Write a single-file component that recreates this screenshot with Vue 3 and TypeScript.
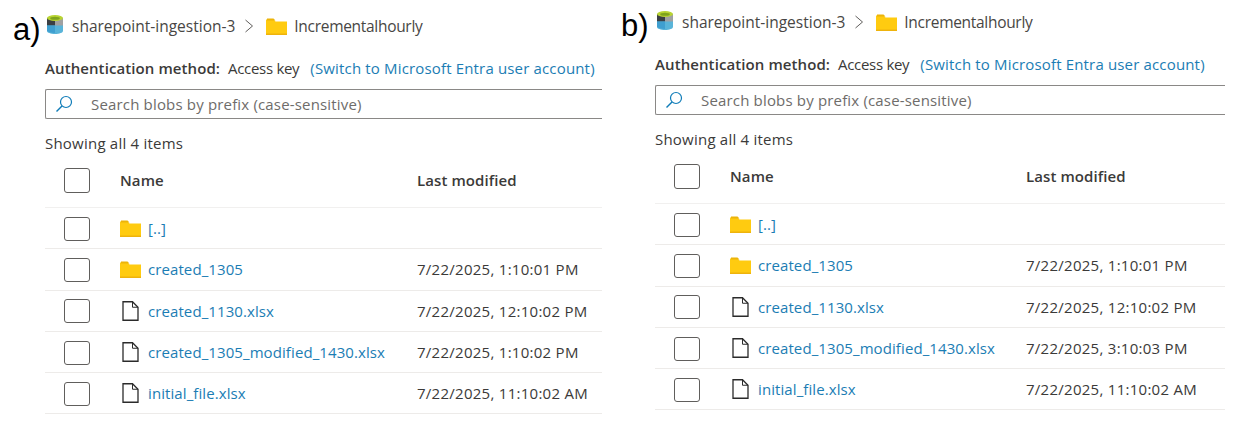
<script setup lang="ts">
interface Row { name: string; kind: 'folder' | 'file'; modified: string }
interface Panel { id: string; label: string; rows: Row[] }

const mk = (third: string): Row[] => [
  { name: '[..]', kind: 'folder', modified: '' },
  { name: 'created_1305', kind: 'folder', modified: '7/22/2025, 1:10:01 PM' },
  { name: 'created_1130.xlsx', kind: 'file', modified: '7/22/2025, 12:10:02 PM' },
  { name: 'created_1305_modified_1430.xlsx', kind: 'file', modified: third },
  { name: 'initial_file.xlsx', kind: 'file', modified: '7/22/2025, 11:10:02 AM' },
]
const panels: Panel[] = [
  { id: 'a', label: 'a)', rows: mk('7/22/2025, 1:10:02 PM') },
  { id: 'b', label: 'b)', rows: mk('7/22/2025, 3:10:03 PM') },
]
</script>

<template>
  <div class="page">
    <section v-for="p in panels" :key="p.id" class="panel" :class="'panel-' + p.id">
      <header class="crumbs">
        <span class="label">{{ p.label }}</span>
        <svg class="container-icon" width="16" height="19" viewBox="0 0 16 19">
          <path d="M0 3v13c0 1.600 3.600 3 8 3s8-1.400 8-3V3z" fill="#59b4d9" />
          <path d="M0 3v7.500h8V3z" fill="#3b3f44" />
          <path d="M8 3v7.500h8V3z" fill="#a0a1a2" />
          <path d="M0 10.500v5.500c1.500 1.300 5 2 8 2v-7.500z" fill="#3f9fd0" />
          <ellipse cx="8" cy="3" rx="8" ry="3" fill="#b8d432" />
          <ellipse cx="8" cy="3.300" rx="4.800" ry="1.500" fill="#7fa31c" />
        </svg>
        <span class="crumb">sharepoint-ingestion-3</span>
        <svg class="chev" width="10" height="16" viewBox="0 0 10 16">
          <path d="M1.500 2l7 6-7 6" fill="none" stroke="#605e5c" stroke-width="1" />
        </svg>
        <svg class="folder crumb-folder" width="21" height="17" viewBox="0 0 21 17">
          <path d="M0 1.500h7.500l2 2H21V17H0z" fill="#ffcb10" />
          <path d="M1 .5h6.500l2 2H1z" fill="#ecb40a" />
          <path d="M0 15.500h21V17H0z" fill="#eeb30c" />
        </svg>
        <span class="crumb crumb-last">Incrementalhourly</span>
      </header>

      <div class="body">
        <p class="auth">
          <strong>Authentication method:</strong>
          <span class="key">Access key</span>
          <a class="link">(Switch to Microsoft Entra user account)</a>
        </p>

        <div class="search">
          <svg class="search-icon" width="18" height="18" viewBox="0 0 18 18">
            <circle cx="11" cy="7" r="5.500" fill="none" stroke="#0f7cb8" stroke-width="1.200" />
            <path d="M7 11L1.500 16.500" fill="none" stroke="#0f7cb8" stroke-width="1.400" />
          </svg>
          <span>Search blobs by prefix (case-sensitive)</span>
        </div>

        <p class="count">Showing all 4 items</p>

        <div class="row head">
          <span class="check tall"></span>
          <span class="name-cell"><b>Name</b></span>
          <span class="date"><b>Last modified</b></span>
        </div>
        <div v-for="r in p.rows" :key="r.name" class="row">
          <span class="check"></span>
          <span class="name-cell">
            <span class="type-icon">
              <svg v-if="r.kind === 'folder'" class="folder" width="21" height="17" viewBox="0 0 21 17">
                <path d="M0 1.500h7.500l2 2H21V17H0z" fill="#ffcb10" />
                <path d="M1 .5h6.500l2 2H1z" fill="#ecb40a" />
                <path d="M0 15.500h21V17H0z" fill="#eeb30c" />
              </svg>
              <svg v-else class="file" width="17" height="20" viewBox="0 0 17 20">
                <path d="M1 .75h9.500L16 6.250V19.250H1z" fill="#fff" stroke="#2b2b2b" stroke-width="1.300" />
                <path d="M10.500 .75v5.500H16" fill="none" stroke="#2b2b2b" stroke-width="1" />
              </svg>
            </span>
            <a class="file-link">{{ r.name }}</a>
          </span>
          <span class="date">{{ r.modified }}</span>
        </div>
      </div>
    </section>
  </div>
</template>

<style>
html, body { margin: 0; background: #fff; }
</style>

<style scoped>
.page {
  display: flex;
  width: 1238px;
  height: 430px;
  overflow: hidden;
  font-family: "Open Sans", "Noto Sans", sans-serif;
  font-size: 15px;
  color: #3b3a39;
  letter-spacing: 0.09px;
}
.panel { box-sizing: border-box; display: flex; flex-direction: column; }
.panel-a { width: 621px; padding: 12px 19px 0 13px; }
.panel-b { width: 617px; padding: 8px 13px 0 0; }
.crumbs { display: flex; align-items: center; height: 28px; }
.label {
  width: 32px;
  margin-top: 8px;
  font-family: "Liberation Sans", sans-serif;
  font-size: 31px;
  line-height: 28px;
  color: #000;
  letter-spacing: 0;
}
.panel-b .label { width: 34px; }
.container-icon { margin: -3px 9px 0 2px; }
.crumb { font-size: 15.500px; letter-spacing: 0; color: #484644; }
.crumb-last { letter-spacing: -0.3px; }
.chev { margin: 0 12px 0 9px; }
.crumb-folder { margin-right: 7px; }
.body { padding-left: 32px; display: flex; flex-direction: column; }
.panel-b .body { padding-left: 34px; }
.auth { margin: 17px 0 0; height: 22px; line-height: 22px; white-space: nowrap; }
.auth strong { font-weight: 600; color: #3b3a39; }
.key { margin-left: 8px; letter-spacing: -0.3px; }
.link, .file-link { color: #1b7db4; }
.link { margin-left: 11px; letter-spacing: 0.16px; }
.search {
  box-sizing: border-box;
  display: flex;
  align-items: center;
  height: 30px;
  margin-top: 10px;
  border: 1px solid #8a8886;
  border-right: 0;
  border-radius: 2px 0 0 2px;
  color: #6e6c6a;
  letter-spacing: 0.17px;
}
.search-icon { margin: 0 18px 0 9px; }
.count { margin: 15px 0 0; height: 19px; line-height: 19px; letter-spacing: 0.22px; }
.row {
  display: grid;
  grid-template-columns: 75px 297px 1fr;
  align-items: center;
  height: 41.300px;
  border-bottom: 1px solid #edebe9;
  box-sizing: border-box;
}
.panel-b .row { grid-template-columns: 75px 296px 1fr; }
.row.head { height: 55px; border-bottom-color: #f1f0ef; }
.row.head b { font-weight: 600; color: #3b3a39; }
.row.head .name-cell, .row.head .date { margin-top: 0; }
.check {
  box-sizing: border-box;
  display: block;
  width: 26px;
  height: 24px;
  margin: 1px 0 0 19px;
  border: 1px solid #605e5c;
  border-radius: 3px;
}
.check.tall { height: 25px; margin-top: 0; }
.name-cell { display: flex; align-items: center; white-space: nowrap; }
.type-icon { display: flex; justify-content: center; width: 21px; margin-right: 7px; }
.file-link { padding-top: 0; }
.folder, .file { display: block; }
.date { white-space: nowrap; letter-spacing: 0.27px; }
.row.head .date { letter-spacing: 0.09px; }
</style>
